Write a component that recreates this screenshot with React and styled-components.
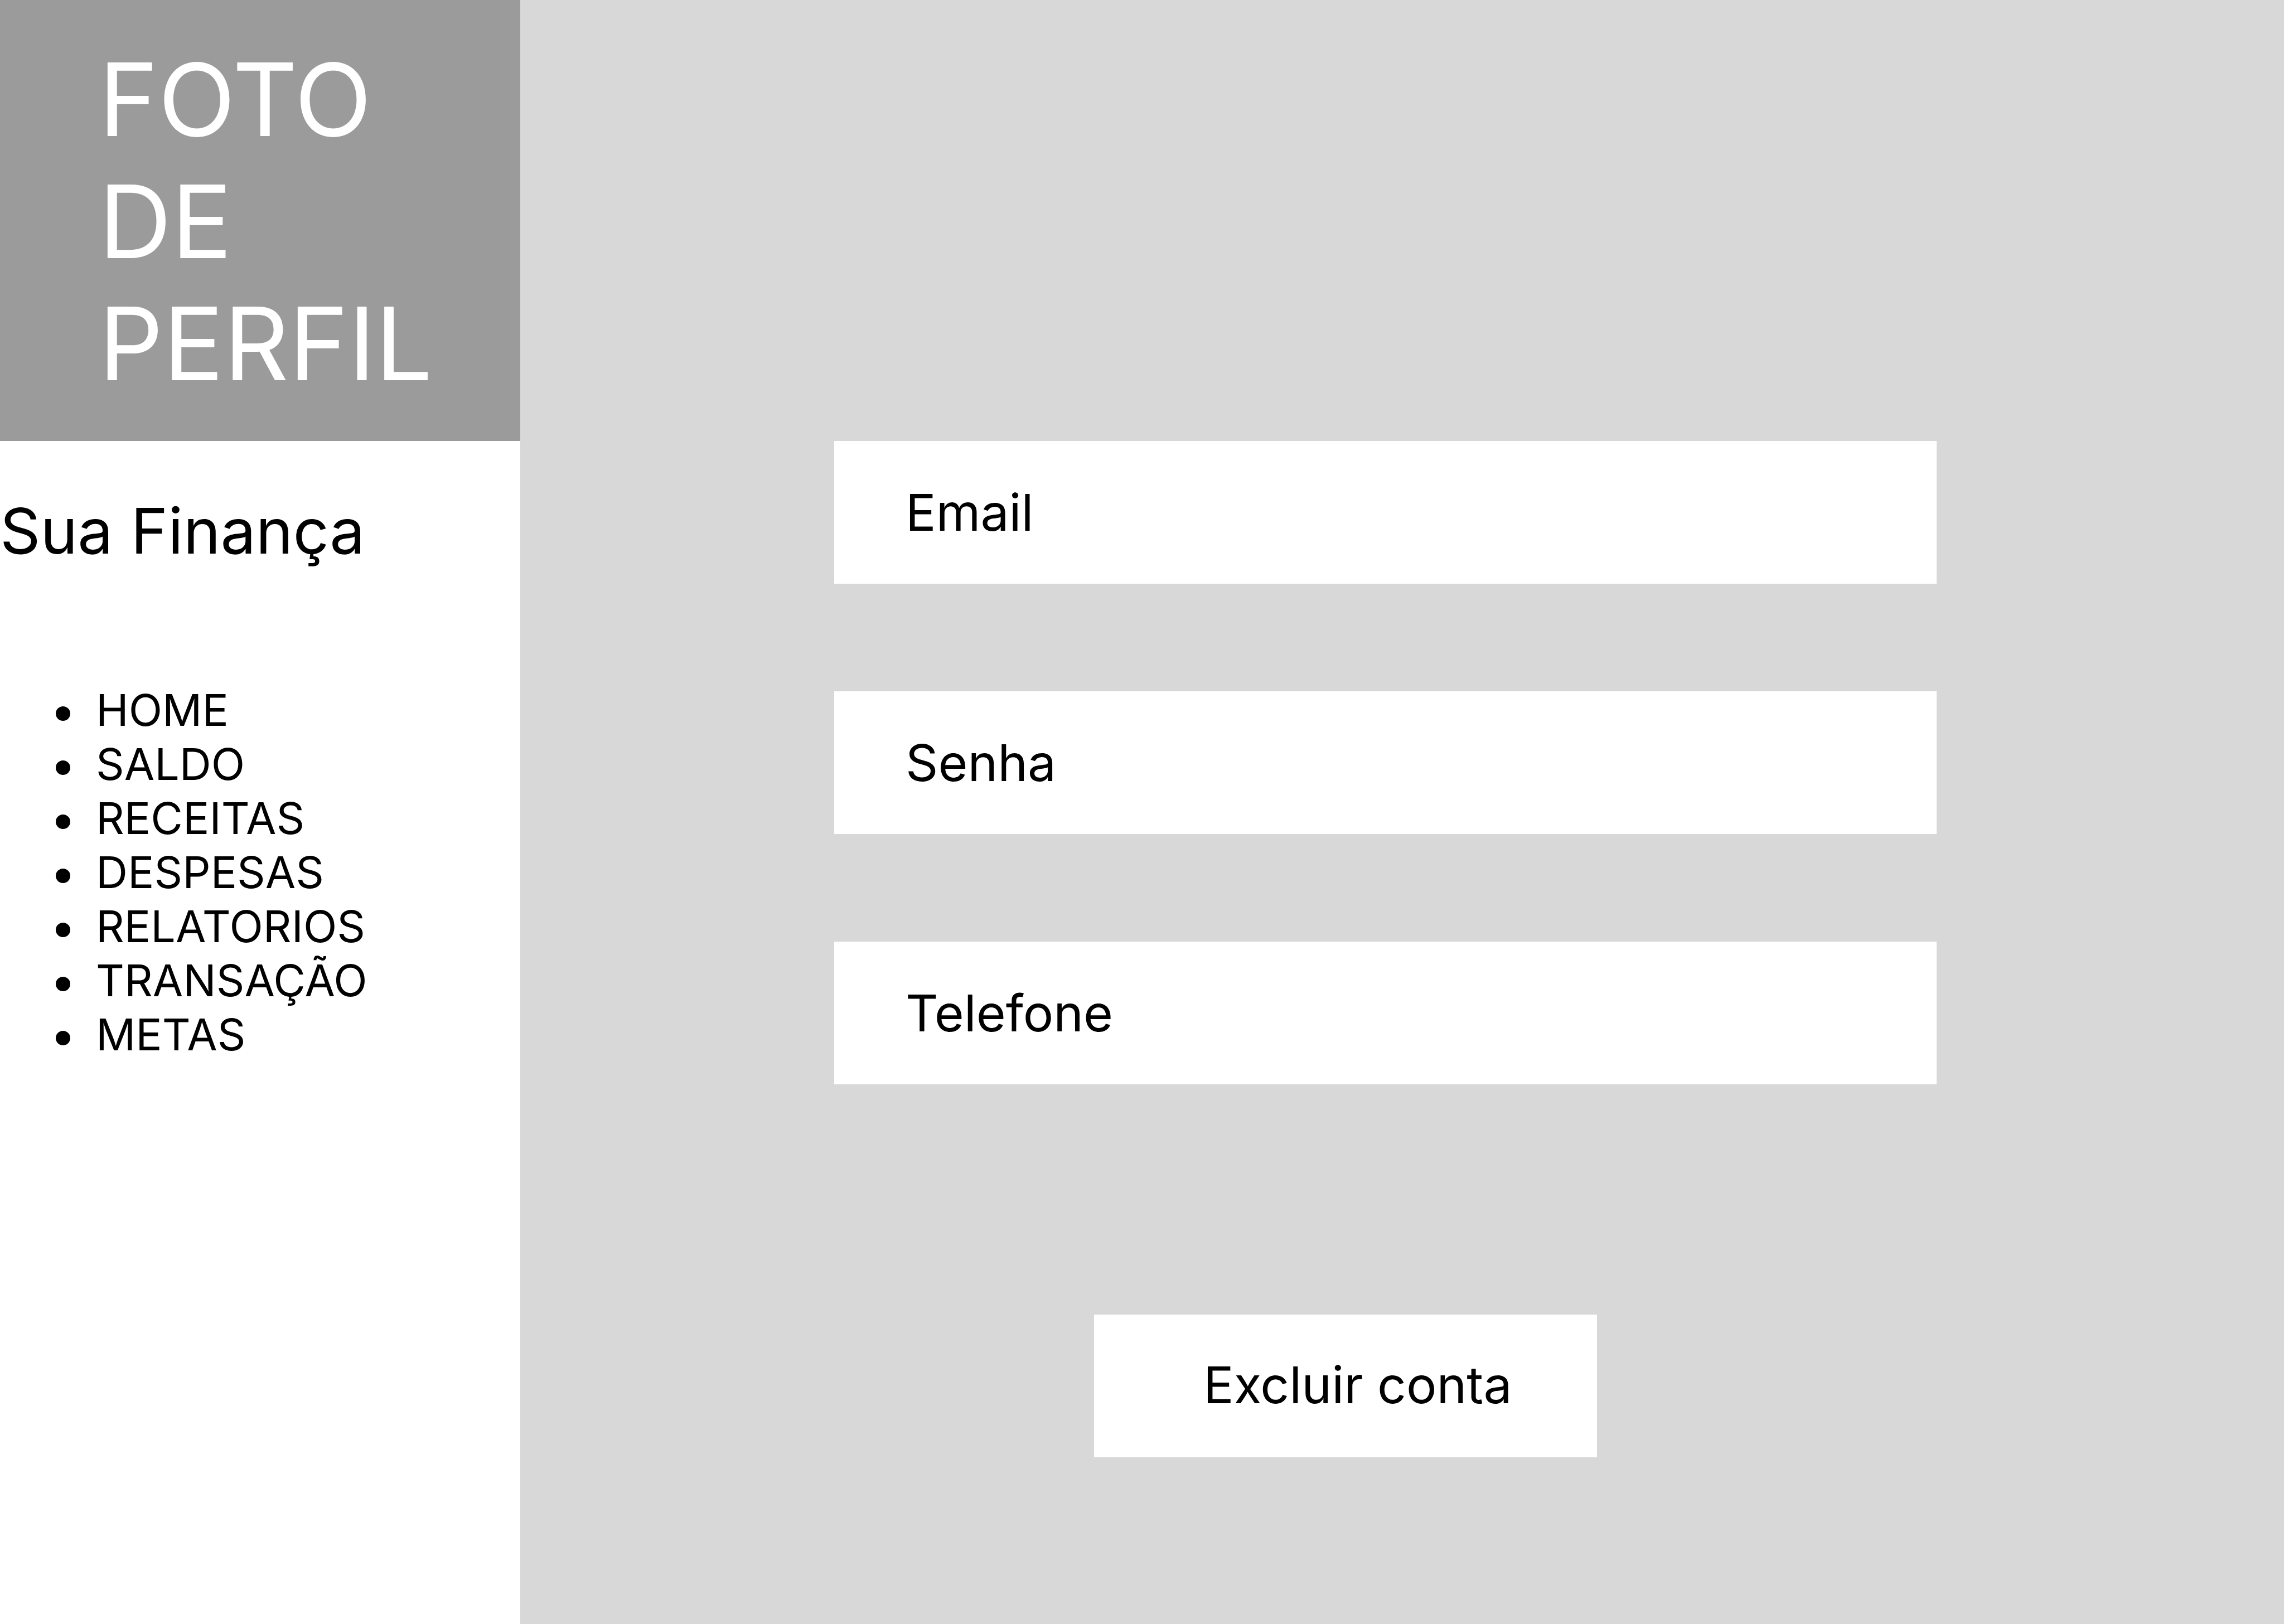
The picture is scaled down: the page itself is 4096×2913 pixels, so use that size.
import React from "react";
import styled, { createGlobalStyle } from "styled-components";

const GlobalStyle = createGlobalStyle`
  *, *::before, *::after { box-sizing: border-box; }
  body {
    margin: 0;
    background: #d8d8d8;
    color: #000;
    font-family: Inter, "Liberation Sans", sans-serif;
    font-optical-sizing: none;
  }
`;

const Page = styled.div`
  display: flex;
  min-height: 100vh;
`;

const Sidebar = styled.aside`
  flex: 0 0 933px;
  background: #fff;
`;

const ProfilePhoto = styled.div`
  padding: 69px 128px 65px 177px;
  background: #9b9b9b;
  color: #fff;
  font-size: 181px;
  line-height: 219px;
`;

const Brand = styled.h1`
  margin: 92px 0 204px;
  font-size: 113px;
  font-weight: 400;
  line-height: 138px;
`;

const Menu = styled.ul`
  margin: 0;
  padding: 0 0 0 100px;
  list-style: none;
`;

const MenuItem = styled.li`
  display: flex;
  align-items: center;
  gap: 46px;
  font-size: 79px;
  line-height: 97px;

  &::before {
    content: "";
    flex: none;
    width: 26px;
    height: 26px;
    margin-top: 12px;
    border-radius: 50%;
    background: currentColor;
  }
`;

const MenuLink = styled.a`
  color: inherit;
  text-decoration: none;
`;

const Main = styled.main`
  flex: 1;
  min-width: 0;
  padding: 791px 623px 299px 563px;
`;

const Form = styled.form`
  display: flex;
  flex-direction: column;
  gap: 193px;
`;

const Field = styled.label`
  display: flex;
  gap: 48px;
  padding: 73px 128px;
  background: #fff;
  font-size: 91px;
  line-height: 110px;
`;

const Input = styled.input`
  flex: 1;
  min-width: 0;
  padding: 0;
  border: 0;
  outline: 0;
  background: transparent;
  color: inherit;
  font: inherit;
`;

const DeleteButton = styled.button`
  align-self: flex-start;
  margin: 220px 0 0 466px;
  padding: 71px 152px 75px 196px;
  border: 0;
  background: #fff;
  color: inherit;
  font-family: inherit;
  font-size: 91px;
  line-height: 110px;
  white-space: nowrap;
  cursor: pointer;
`;

const menu = ["HOME", "SALDO", "RECEITAS", "DESPESAS", "RELATORIOS", "TRANSAÇÃO", "METAS"];

const fields = [
  { name: "email", label: "Email", type: "email" },
  { name: "senha", label: "Senha", type: "password" },
  { name: "telefone", label: "Telefone", type: "tel" },
];

export default function App() {
  return (
    <>
      <GlobalStyle />
      <Page>
        <Sidebar>
          <ProfilePhoto>FOTO DE PERFIL</ProfilePhoto>
          <Brand>Sua Finança</Brand>
          <nav>
            <Menu>
              {menu.map((item) => (
                <MenuItem key={item}>
                  <MenuLink href={`#${item.toLowerCase()}`}>{item}</MenuLink>
                </MenuItem>
              ))}
            </Menu>
          </nav>
        </Sidebar>
        <Main>
          <Form>
            {fields.map(({ name, label, type }) => (
              <Field key={name} htmlFor={name}>
                {label}
                <Input id={name} name={name} type={type} />
              </Field>
            ))}
            <DeleteButton type="button">Excluir conta</DeleteButton>
          </Form>
        </Main>
      </Page>
    </>
  );
}
